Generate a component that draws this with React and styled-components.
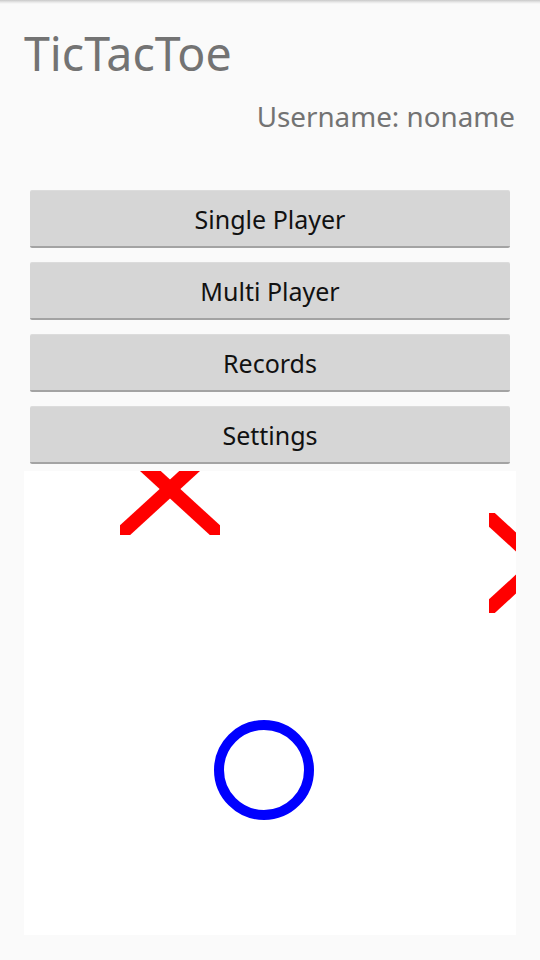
import React from 'react';
import styled, { createGlobalStyle } from 'styled-components';

const GlobalStyle = createGlobalStyle`
  html, body {
    margin: 0;
    padding: 0;
    background: #fafafa;
  }
  body {
    font-family: "Noto Sans", "Open Sans", sans-serif;
  }
`;

const Screen = styled.div`
  width: 540px;
  height: 960px;
  box-sizing: border-box;
  display: flex;
  flex-direction: column;
  padding: 0 24px 25px;
  background: linear-gradient(to bottom, #c8c8c8 0px, #e6e6e6 2px, #fafafa 4px);
`;

const Title = styled.h1`
  margin: 23px 0 0;
  font-size: 46.5px;
  font-weight: 400;
  line-height: 60px;
  color: #737373;
`;

const Username = styled.div`
  align-self: flex-end;
  margin-top: 15px;
  margin-right: 1px;
  font-size: 27.8px;
  line-height: 36px;
  color: #737373;
`;

const Menu = styled.div`
  display: flex;
  flex-direction: column;
  gap: 14px;
  margin: 56px 6px 7px;
`;

const MenuButton = styled.button`
  height: 58px;
  border: none;
  border-top: 1px solid #dcdcdc;
  border-bottom: 2px solid #a3a3a3;
  border-radius: 2px;
  background: #d6d6d6;
  font-family: "Noto Sans", "Open Sans", sans-serif;
  font-size: 25px;
  color: #111;
  padding: 0;
`;

const Board = styled.div`
  flex: 1;
  background: #ffffff;
  overflow: hidden;
`;

const Cross = ({ x, y }) => (
  <g stroke="#ff0000" strokeWidth="14">
    <line x1={x - 60} y1={y - 55} x2={x + 60} y2={y + 55} />
    <line x1={x + 60} y1={y - 55} x2={x - 60} y2={y + 55} />
  </g>
);

const items = ['Single Player', 'Multi Player', 'Records', 'Settings'];

export default function App() {
  return (
    <>
      <GlobalStyle />
      <Screen>
        <Title>TicTacToe</Title>
        <Username>Username: noname</Username>
        <Menu>
          {items.map((label) => (
            <MenuButton key={label}>{label}</MenuButton>
          ))}
        </Menu>
        <Board>
          <svg width="492" height="464" viewBox="0 0 492 464">
            <defs>
              <clipPath id="c1">
                <rect x="96" y="-36" width="100" height="100" />
              </clipPath>
              <clipPath id="c2">
                <rect x="465" y="42" width="100" height="100" />
              </clipPath>
            </defs>
            <g clipPath="url(#c1)">
              <Cross x={146} y={18} />
            </g>
            <g clipPath="url(#c2)">
              <Cross x={515} y={92} />
            </g>
            <circle cx="240" cy="299" r="45" fill="none" stroke="#0000ff" strokeWidth="10" />
          </svg>
        </Board>
      </Screen>
    </>
  );
}
